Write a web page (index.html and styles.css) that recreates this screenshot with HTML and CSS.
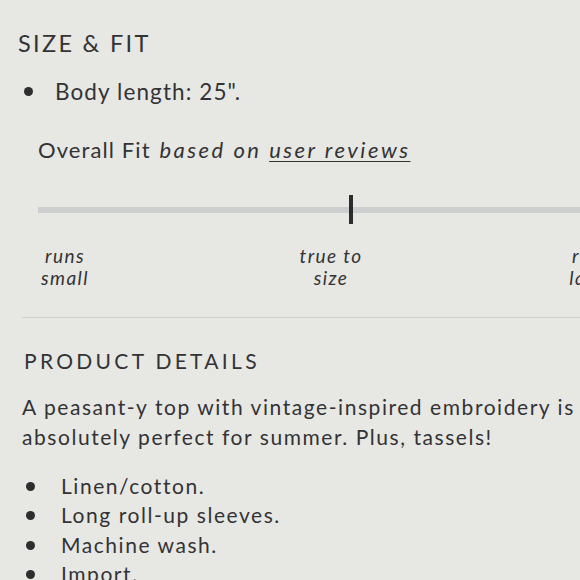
FILE: index.html
```html
<!DOCTYPE html>
<html>
<head>
<meta charset="utf-8">
<link rel="stylesheet" href="styles.css">
</head>
<body>
<div class="page">
  <section class="fit">
    <h2 class="heading">SIZE &amp; FIT</h2>
    <ul class="size-list">
      <li>Body length: 25".</li>
    </ul>
    <div class="overall">
      <p class="overall-title">Overall Fit <em>based on <u>user reviews</u></em></p>
      <div class="scale">
        <div class="track"><span class="marker"></span></div>
      </div>
      <div class="labels">
        <span class="label">runs<br>small</span>
        <span class="label">true to<br>size</span>
        <span class="label label-end">runs<br>large</span>
      </div>
    </div>
  </section>
  <section class="details">
    <h2 class="heading heading-details">PRODUCT DETAILS</h2>
    <p class="desc">A peasant-y top with vintage-inspired embroidery is absolutely perfect for summer. Plus, tassels!</p>
    <ul class="detail-list">
      <li>Linen/cotton.</li>
      <li>Long roll-up sleeves.</li>
      <li>Machine wash.</li>
      <li>Import.</li>
    </ul>
  </section>
</div>
</body>
</html>
```
FILE: styles.css
```css
html, body {
  margin: 0;
  padding: 0;
  background: #e7e7e4;
}
body {
  font-family: Lato, "Open Sans", sans-serif;
  color: #333335;
  overflow: hidden;
  width: 580px;
  height: 580px;
}
.page {
  width: 660px;
  padding-top: 30px;
}
.heading {
  margin: 0;
  font-weight: 400;
  font-size: 23.5px;
  letter-spacing: 2.3px;
  line-height: 26px;
  padding-left: 18px;
}
.size-list {
  margin: 0;
  padding: 0;
  list-style: none;
}
.size-list li {
  position: relative;
  padding-left: 55px;
  margin-top: 23px;
  font-size: 22.5px;
  letter-spacing: 1.1px;
  line-height: 26px;
}
.size-list li::before,
.detail-list li::before {
  content: "";
  position: absolute;
  width: 9px;
  height: 9px;
  border-radius: 50%;
  background: #2e2e30;
}
.size-list li::before {
  left: 24px;
  top: 8px;
}
.overall {
  padding-left: 38px;
}
.overall-title {
  margin: 32px 0 0;
  font-size: 22px;
  letter-spacing: 1.1px;
  line-height: 26px;
}
.overall-title em {
  font-style: italic;
  letter-spacing: 2.5px;
  margin-left: 2px;
}
.overall-title u {
  text-decoration-thickness: 1px;
  text-underline-offset: 3px;
}
.scale {
  margin-top: 33px;
  height: 28px;
  display: flex;
  align-items: center;
}
.track {
  position: relative;
  width: 620px;
  height: 6px;
  background: #cdcfcf;
}
.marker {
  position: absolute;
  left: 311px;
  top: -12px;
  width: 4px;
  height: 29px;
  background: #2c2b30;
}
.labels {
  display: grid;
  grid-template-columns: 80px 80px 80px;
  column-gap: 186px;
  margin-top: 21px;
  margin-left: -13px;
}
.label {
  font-style: italic;
  font-size: 19px;
  letter-spacing: 1.4px;
  line-height: 22px;
  text-align: center;
  white-space: nowrap;
}
.label-end {
  margin-left: -10px;
}
.details {
  margin-top: 28px;
  margin-left: 22px;
  border-top: 1px solid #cdcdcb;
  padding-top: 30px;
}
.heading-details {
  font-size: 21px;
  letter-spacing: 3.3px;
  padding-left: 2px;
}
.desc {
  margin: 18px 0 0;
  font-size: 21px;
  line-height: 30px;
  width: 570px;
  letter-spacing: 1.55px;
}
.detail-list {
  margin: 19px 0 0;
  padding: 0;
  list-style: none;
}
.detail-list li {
  position: relative;
  padding-left: 39px;
  font-size: 21px;
  line-height: 29.3px;
  letter-spacing: 1.55px;
}
.detail-list li::before {
  left: 4px;
  top: 11px;
}
```
